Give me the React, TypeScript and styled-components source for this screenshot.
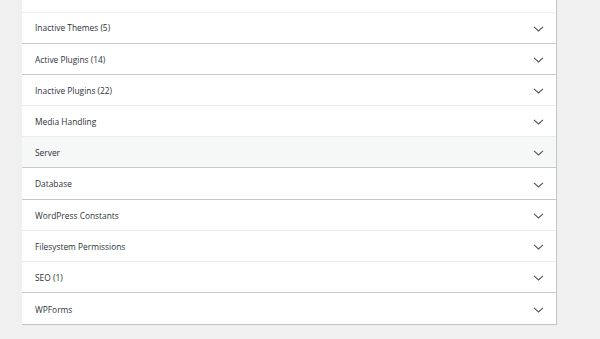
import React from "react";
import styled, { createGlobalStyle } from "styled-components";

const Global = createGlobalStyle`
  html, body { margin: 0; padding: 0; background: #f0f0f1; }
  body { font-family: "Open Sans", "Noto Sans", sans-serif; }
`;

const Page = styled.div`
  padding: 0 43px 0 22px;
  height: 339px;
  box-sizing: border-box;
`;

const Panel = styled.div`
  width: 535px;
  background: #fff;
  border-right: 1px solid #c3c4c7;
  border-bottom: 1px solid #c3c4c7;
  box-sizing: border-box;
`;

const TopEdge = styled.div`
  height: 11.5px;
  border-bottom: 1px solid #f0f0f1;
`;

const Row = styled.button<{ $active?: boolean; $light?: boolean; $last?: boolean }>`
  display: flex;
  align-items: center;
  justify-content: space-between;
  width: 100%;
  height: 31.2px;
  padding: 2px 12px 0 13px;
  margin: 0;
  border: 0;
  border-bottom: ${(p) => (p.$last ? "0" : `1px solid ${p.$light ? "#ebebec" : "#c8c9cb"}`)};
  background: ${(p) => (p.$active ? "#f6f7f7" : "#fff")};
  box-sizing: border-box;
  font-family: "Open Sans", "Noto Sans", sans-serif;
  font-size: 8.4px;
  color: #2c3338;
  text-align: left;
  cursor: pointer;
`;

const Label = styled.span`
  line-height: 1;
`;

const Chevron = () => (
  <svg width="11" height="6" viewBox="0 0 11 6" aria-hidden="true">
    <path d="M1 0.8 L5.5 5 L10 0.8" fill="none" stroke="#50575e" strokeWidth="1.1" />
  </svg>
);

const items: { label: string; active?: boolean; light?: boolean }[] = [
  { label: "Inactive Themes (5)" },
  { label: "Active Plugins (14)" },
  { label: "Inactive Plugins (22)", light: true },
  { label: "Media Handling", light: true },
  { label: "Server", active: true },
  { label: "Database" },
  { label: "WordPress Constants", light: true },
  { label: "Filesystem Permissions", light: true },
  { label: "SEO (1)" },
  { label: "WPForms" },
];

export default function App() {
  return (
    <>
      <Global />
      <Page>
        <Panel>
          <TopEdge />
          {items.map((it, i) => (
            <Row key={it.label} $active={it.active} $light={it.light} $last={i === items.length - 1}>
              <Label>{it.label}</Label>
              <Chevron />
            </Row>
          ))}
        </Panel>
      </Page>
    </>
  );
}
